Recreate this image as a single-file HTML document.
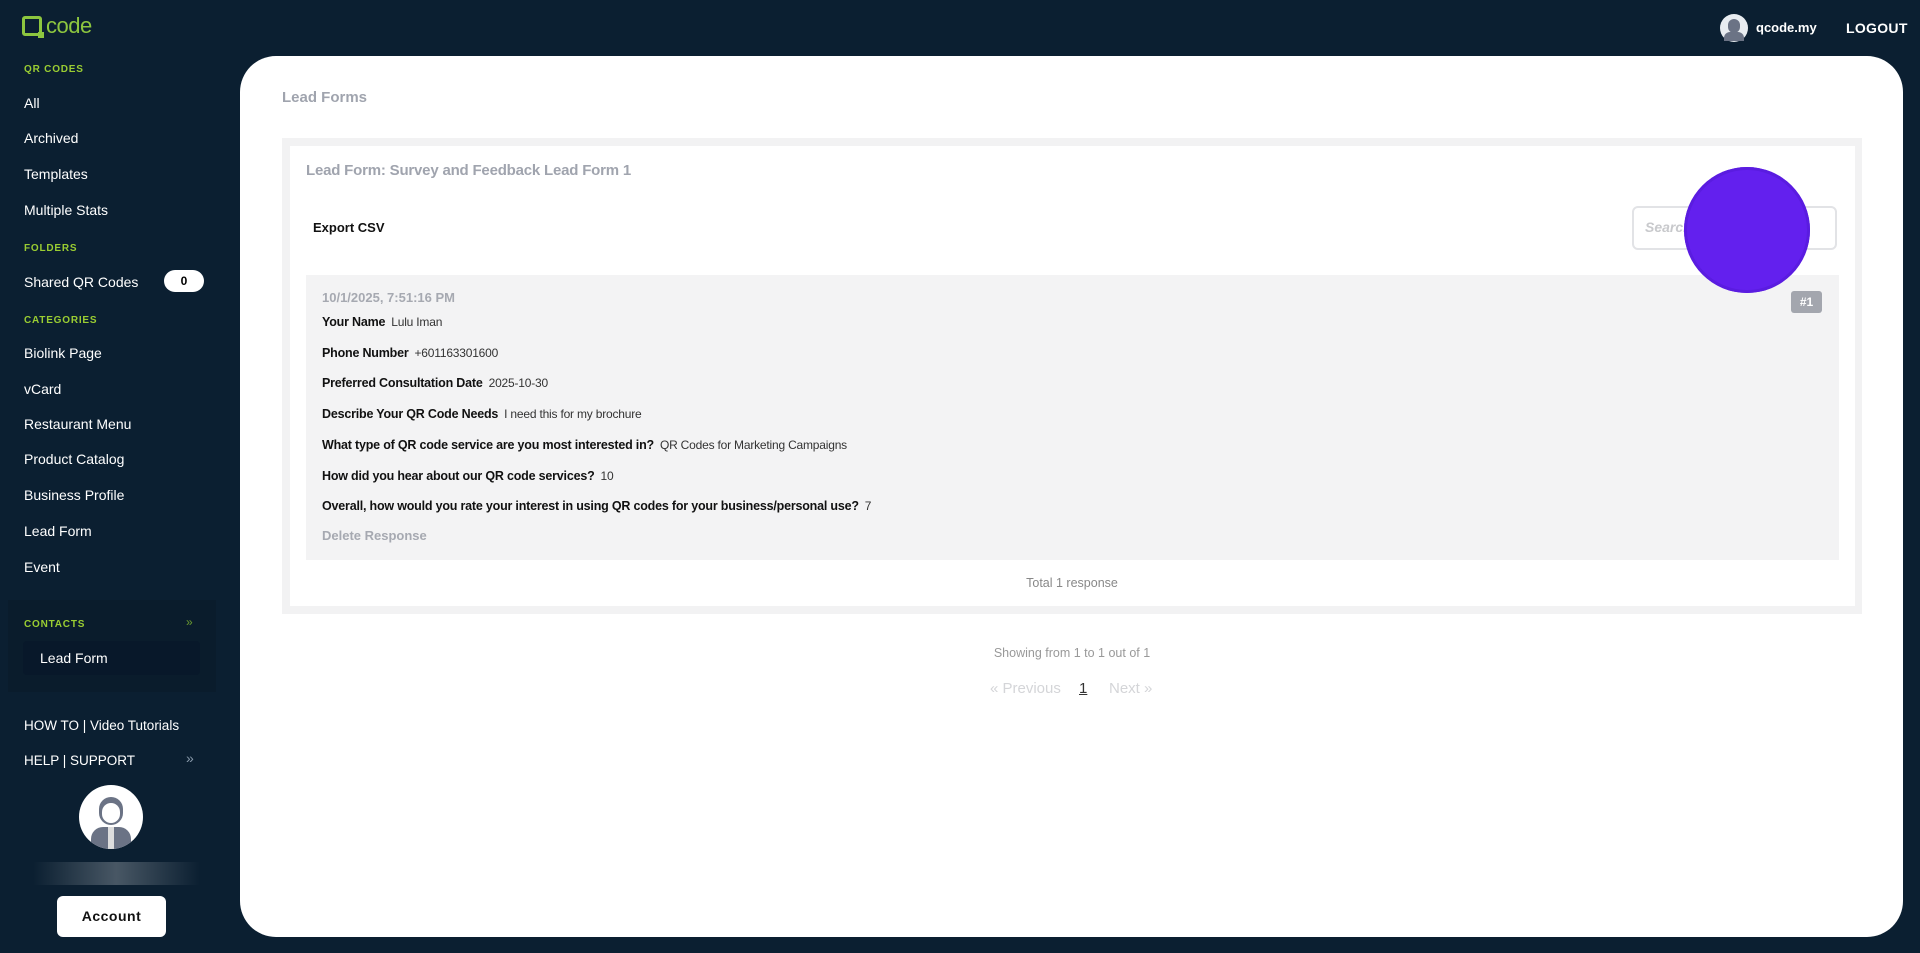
<!DOCTYPE html>
<html><head><meta charset="utf-8"><style>
*{margin:0;padding:0;box-sizing:border-box}
body{width:1920px;height:953px;background:#0b1f31;font-family:"Liberation Sans",sans-serif;position:relative;overflow:hidden;color:#fff}
.a{position:absolute;white-space:nowrap}
.sec{font-size:10px;font-weight:bold;color:#9acd32;letter-spacing:.8px;left:24px}
.nav{font-size:14px;color:#fff;left:24px}
.main{position:absolute;left:240px;top:56px;width:1663px;height:881px;background:#fff;border-radius:36px}
.lbl{font-weight:bold;color:#111;font-size:12.5px;letter-spacing:-.2px}
.val{color:#333;font-size:12px;margin-left:6px;letter-spacing:-.2px}
.row{position:absolute;left:322px;white-space:nowrap}
</style></head><body>
<!-- logo -->
<div class="a" style="left:22px;top:16px;width:20px;height:20px;border:3px solid #8dc63f;border-radius:3px"></div>
<div class="a" style="left:38px;top:32px;width:6px;height:6px;background:#8dc63f"></div>
<div class="a" style="left:46px;top:13px;font-size:22px;color:#8dc63f;letter-spacing:-.5px">code</div>

<div class="a sec" style="top:64px">QR CODES</div>
<div class="a nav" style="top:95px">All</div>
<div class="a nav" style="top:130px">Archived</div>
<div class="a nav" style="top:166px">Templates</div>
<div class="a nav" style="top:202px">Multiple Stats</div>
<div class="a sec" style="top:243px">FOLDERS</div>
<div class="a nav" style="top:274px">Shared QR Codes</div>
<div class="a" style="left:164px;top:270px;width:40px;height:22px;background:#fff;border-radius:11px;color:#000;font-weight:bold;font-size:12px;text-align:center;line-height:22px">0</div>
<div class="a sec" style="top:315px">CATEGORIES</div>
<div class="a nav" style="top:345px">Biolink Page</div>
<div class="a nav" style="top:381px">vCard</div>
<div class="a nav" style="top:416px">Restaurant Menu</div>
<div class="a nav" style="top:451px">Product Catalog</div>
<div class="a nav" style="top:487px">Business Profile</div>
<div class="a nav" style="top:523px">Lead Form</div>
<div class="a nav" style="top:559px">Event</div>
<div class="a" style="left:8px;top:600px;width:208px;height:92px;background:#0a1c2c"></div>
<div class="a sec" style="top:619px">CONTACTS</div>
<div class="a" style="left:186px;top:615px;color:#6a9a30;font-size:12px">»</div>
<div class="a" style="left:23px;top:641px;width:177px;height:34px;background:#08182a;border-radius:4px"></div>
<div class="a nav" style="left:40px;top:650px">Lead Form</div>
<div class="a nav" style="top:718px;font-size:13.5px">HOW TO | Video Tutorials</div>
<div class="a nav" style="top:753px;font-size:13.5px">HELP | SUPPORT</div>
<div class="a" style="left:186px;top:750px;color:#8899aa;font-size:14px">»</div>
<div class="a" style="left:79px;top:785px;width:64px;height:64px;border-radius:50%;background:#fff;overflow:hidden">
<div style="position:absolute;left:20px;top:12px;width:24px;height:28px;border-radius:12px;background:#6b7385"></div>
<div style="position:absolute;left:23px;top:18px;width:18px;height:20px;border-radius:9px;background:#fff"></div>
<div style="position:absolute;left:12px;top:42px;width:40px;height:26px;border-radius:12px 12px 0 0;background:#6b7385"></div>
<div style="position:absolute;left:29px;top:42px;width:6px;height:22px;background:#ddd"></div></div>
<div class="a" style="left:33px;top:862px;width:167px;height:23px;background:linear-gradient(90deg,rgba(255,255,255,0),rgba(255,255,255,.25),rgba(255,255,255,0))"></div>
<div class="a" style="left:57px;top:896px;width:109px;height:41px;background:#fff;border-radius:6px;color:#111;font-weight:bold;font-size:14px;text-align:center;line-height:41px;letter-spacing:.5px">Account</div>

<!-- header -->
<div class="a" style="left:1720px;top:14px;width:28px;height:28px;border-radius:50%;background:#e8ecf0"></div>
<div class="a" style="left:1728px;top:19px;width:12px;height:14px;border-radius:6px;background:#6b7385"></div>
<div class="a" style="left:1724px;top:32px;width:20px;height:9px;border-radius:6px 6px 0 0;background:#6b7385"></div>
<div class="a" style="left:1756px;top:20px;font-size:13px;font-weight:bold">qcode.my</div>
<div class="a" style="left:1846px;top:20px;font-size:14px;font-weight:bold;letter-spacing:.3px">LOGOUT</div>

<div class="main"></div>
<div class="a" style="left:282px;top:89px;font-size:15px;font-weight:bold;color:#a0a4ae">Lead Forms</div>
<div class="a" style="left:282px;top:138px;width:1580px;height:476px;background:#f2f2f3"></div>
<div class="a" style="left:290px;top:146px;width:1565px;height:460px;background:#fff"></div>
<div class="a" style="left:306px;top:162px;font-size:15px;font-weight:bold;color:#a0a4ae;letter-spacing:-.2px">Lead Form: Survey and Feedback Lead Form 1</div>
<div class="a" style="left:313px;top:220px;font-size:13px;font-weight:bold;color:#111">Export CSV</div>
<div class="a" style="left:1632px;top:206px;width:205px;height:44px;border:2px solid #e2e3e6;border-radius:6px"></div>
<div class="a" style="left:1645px;top:219px;font-size:14px;font-weight:bold;font-style:italic;color:#c8c9cc">Search</div>
<div class="a" style="left:306px;top:275px;width:1533px;height:285px;background:#f3f3f4"></div>
<div class="a" style="left:1791px;top:291px;width:31px;height:22px;background:#a3a6ae;border-radius:3px;color:#fff;font-size:12px;font-weight:bold;text-align:center;line-height:22px">#1</div>
<div class="a" style="left:1684px;top:167px;width:126px;height:126px;border-radius:50%;background:#6320ee;box-shadow:inset 0 0 0 3px #5a1ce0"></div>
<div class="row" style="top:290px;font-size:13px;font-weight:bold;color:#a6a9b1">10/1/2025, 7:51:16 PM</div>
<div class="row" style="top:313px"><span class="lbl">Your Name</span><span class="val">Lulu Iman</span></div>
<div class="row" style="top:344px"><span class="lbl">Phone Number</span><span class="val">+601163301600</span></div>
<div class="row" style="top:374px"><span class="lbl">Preferred Consultation Date</span><span class="val">2025-10-30</span></div>
<div class="row" style="top:405px"><span class="lbl">Describe Your QR Code Needs</span><span class="val">I need this for my brochure</span></div>
<div class="row" style="top:436px"><span class="lbl">What type of QR code service are you most interested in?</span><span class="val">QR Codes for Marketing Campaigns</span></div>
<div class="row" style="top:467px"><span class="lbl">How did you hear about our QR code services?</span><span class="val">10</span></div>
<div class="row" style="top:497px"><span class="lbl">Overall, how would you rate your interest in using QR codes for your business/personal use?</span><span class="val">7</span></div>
<div class="row" style="top:528px;font-size:13px;font-weight:bold;color:#a6a9b1">Delete Response</div>
<div class="a" style="left:972px;width:200px;top:576px;text-align:center;font-size:12.5px;color:#888">Total 1 response</div>
<div class="a" style="left:922px;width:300px;top:646px;text-align:center;font-size:12.5px;color:#999">Showing from 1 to 1 out of 1</div>
<div class="a" style="left:990px;top:680px;font-size:15px;color:#d4d5d8">« Previous</div>
<div class="a" style="left:1079px;top:680px;font-size:15px;color:#333;text-decoration:underline">1</div>
<div class="a" style="left:1109px;top:680px;font-size:15px;color:#d4d5d8">Next »</div>
</body></html>
